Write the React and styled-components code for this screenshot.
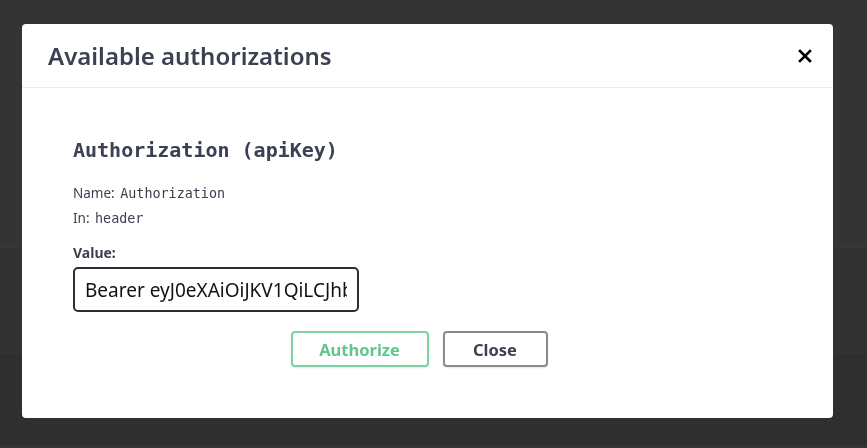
import React from 'react';
import styled, { createGlobalStyle } from 'styled-components';

const GlobalStyle = createGlobalStyle`
  html, body {
    margin: 0;
    padding: 0;
    background: #333;
    font-family: "Noto Sans", "Open Sans", sans-serif;
  }
`;

const Page = styled.div`
  width: 867px;
  height: 448px;
  display: flex;
  flex-direction: column;
  background: #343434;
`;

const PageRow = styled.div`
  height: ${(p) => p.h}px;
  border-bottom: 1px solid ${(p) => p.line || '#3a3a3a'};
  background: ${(p) => p.bg || '#333'};
`;

const Backdrop = styled.div`
  position: fixed;
  inset: 0;
  padding: 24px 0 0 22px;
`;

const Modal = styled.div`
  width: 811px;
  height: 394px;
  background: #fff;
  border-radius: 4px;
  display: flex;
  flex-direction: column;
  overflow: hidden;
`;

const Header = styled.div`
  height: 63px;
  border-bottom: 1px solid #ececec;
  display: flex;
  align-items: center;
  justify-content: space-between;
  padding: 0 18px 0 26px;
`;

const Title = styled.h3`
  margin: 0;
  font-size: 24px;
  font-weight: 600;
  color: #3b4151;
`;

const CloseX = styled.button`
  border: none;
  background: none;
  padding: 0;
  width: 20px;
  height: 20px;
  display: flex;
  align-items: center;
  justify-content: center;
  cursor: pointer;
`;

const Content = styled.div`
  padding: 49px 17px 0 51px;
  display: flex;
  flex-direction: column;
`;

const Scheme = styled.h4`
  margin: 0 0 22px;
  font-family: "DejaVu Sans Mono", monospace;
  font-size: 20px;
  font-weight: 700;
  color: #3b4151;
  line-height: 26px;
`;

const Meta = styled.div`
  font-size: 13.5px;
  color: #3b4151;
  line-height: 17px;
  margin-bottom: 8px;
`;

const Code = styled.code`
  font-family: "DejaVu Sans Mono", monospace;
  font-size: 13.4px;
  color: #3b4151;
  margin-left: 2px;
`;

const Label = styled.label`
  font-size: 14px;
  font-weight: 700;
  color: #3b4151;
  margin-top: 9px;
  line-height: 18px;
`;

const Input = styled.input`
  box-sizing: border-box;
  width: 286px;
  height: 45px;
  margin-top: 5px;
  border: 2px solid #2a2d33;
  border-radius: 5px;
  padding: 0 10px;
  font-family: "Noto Sans", "Open Sans", sans-serif;
  font-size: 19px;
  color: #111;
  outline: none;
`;

const ButtonRow = styled.div`
  display: flex;
  justify-content: center;
  gap: 14px;
  margin-top: 19px;
  margin-left: -51px;
`;

const Btn = styled.button`
  box-sizing: border-box;
  width: ${(p) => p.w}px;
  height: 36px;
  border-radius: 4px;
  background: #fff;
  border: 2px solid ${(p) => (p.primary ? '#7dd3a6' : '#8a8a8a')};
  color: ${(p) => (p.primary ? '#5fc78c' : '#3b4151')};
  font-family: "Noto Sans", "Open Sans", sans-serif;
  font-size: 16.5px;
  font-weight: 700;
  box-shadow: 0 1px 2px rgba(0, 0, 0, 0.1);
  cursor: pointer;
`;

export default function App() {
  return (
    <>
      <GlobalStyle />
      <Page>
        <PageRow h={247} bg="#343434" line="#383838" />
        <PageRow h={107} bg="#323232" line="#2d2d2d" />
        <PageRow h={90} bg="#2f2f2f" line="#3a3a3a" />
      </Page>
      <Backdrop>
        <Modal>
          <Header>
            <Title>Available authorizations</Title>
            <CloseX aria-label="Close">
              <svg width="14" height="14" viewBox="0 0 14 14">
                <path d="M2 2 L12 12 M12 2 L2 12" stroke="#000" strokeWidth="2.6" strokeLinecap="square" />
              </svg>
            </CloseX>
          </Header>
          <Content>
            <Scheme>Authorization (apiKey)</Scheme>
            <Meta>Name: <Code>Authorization</Code></Meta>
            <Meta>In: <Code>header</Code></Meta>
            <Label>Value:</Label>
            <Input defaultValue="Bearer eyJ0eXAiOiJKV1QiLCJhbGciOiJIUzI1NiJ9" />
            <ButtonRow>
              <Btn primary w={138}>Authorize</Btn>
              <Btn w={105}>Close</Btn>
            </ButtonRow>
          </Content>
        </Modal>
      </Backdrop>
    </>
  );
}
